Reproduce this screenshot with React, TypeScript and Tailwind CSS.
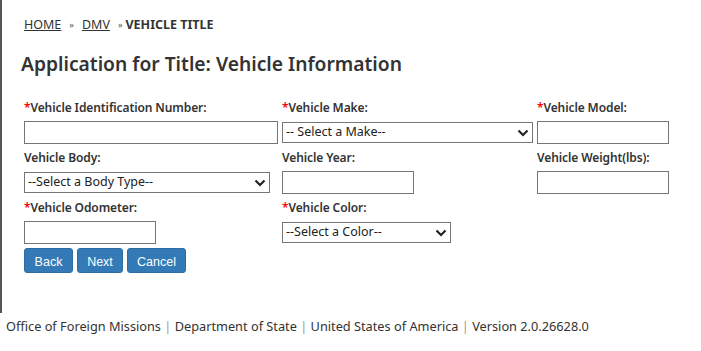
import React from 'react'

const font = { fontFamily: '"Noto Sans", "Open Sans", sans-serif' }

const Label = ({ text, required }: { text: string; required?: boolean }) => (
    <div className="pt-[2px] text-[12px] leading-[16px] font-semibold tracking-[-0.1px] text-[#333] whitespace-nowrap">
        {required && <span className="text-[#f00]">*</span>}
        {text}
    </div>
)

const TextBox = ({ w }: { w: string }) => (
    <div className={`${w} h-[23px] mt-[5px] border border-[#767676] bg-white`} />
)

const Chevron = () => (
    <svg width="12" height="8" viewBox="0 0 12 8" fill="none">
        <path d="M1.5 1.5 L6 6 L10.5 1.5" stroke="#222" strokeWidth="2.2" />
    </svg>
)

const Select = ({ w, text }: { w: string; text: string }) => (
    <div className={`${w} h-[21px] mt-[6px] border border-[#767676] bg-white flex items-center justify-between pl-[3px] pr-[3px]`}>
        <span className="text-[12.5px] text-[#222] whitespace-nowrap">{text}</span>
        <Chevron />
    </div>
)

const Button = ({ label, w }: { label: string; w: string }) => (
    <button
        className={`${w} h-[25px] pt-[2px] rounded-[3px] bg-[#337ab7] border border-[#2e6da4] text-white text-[12.5px] leading-[16px]`}
        style={{ fontFamily: '"Liberation Sans", Arial, sans-serif' }}
    >
        {label}
    </button>
)

export default function App() {
    return (
        <div className="w-[701px] h-[351px] bg-white flex flex-col" style={font}>
            <div className="h-[313px] border-l-2 border-[#555] pl-[22px] pt-[17px]">
                {/* Breadcrumb */}
                <div className="flex items-center text-[12.5px] leading-[16px] text-[#333]">
                    <a className="underline">HOME</a>
                    <span className="mx-[8px] text-[9px] text-[#555]">»</span>
                    <a className="underline">DMV</a>
                    <span className="ml-[8px] mr-[3px] text-[9px] text-[#555]">»</span>
                    <span className="font-bold">VEHICLE TITLE</span>
                </div>

                <h1 className="mt-[17px] -ml-[3px] text-[19.25px] leading-[28px] font-semibold text-[#333]">
                    Application for Title: Vehicle Information
                </h1>

                <div className="mt-[20px] grid grid-cols-[258px_255px_1fr] gap-y-[4px]">
                    <div className="flex flex-col">
                        <Label text="Vehicle Identification Number:" required />
                        <TextBox w="w-[254px]" />
                    </div>
                    <div className="flex flex-col">
                        <Label text="Vehicle Make:" required />
                        <Select w="w-[251px]" text="-- Select a Make--" />
                    </div>
                    <div className="flex flex-col">
                        <Label text="Vehicle Model:" required />
                        <TextBox w="w-[132px]" />
                    </div>

                    <div className="flex flex-col">
                        <Label text="Vehicle Body:" />
                        <Select w="w-[246px]" text="--Select a Body Type--" />
                    </div>
                    <div className="flex flex-col">
                        <Label text="Vehicle Year:" />
                        <TextBox w="w-[132px]" />
                    </div>
                    <div className="flex flex-col">
                        <Label text="Vehicle Weight(lbs):" />
                        <TextBox w="w-[132px]" />
                    </div>

                    <div className="flex flex-col">
                        <Label text="Vehicle Odometer:" required />
                        <TextBox w="w-[132px]" />
                    </div>
                    <div className="flex flex-col">
                        <Label text="Vehicle Color:" required />
                        <Select w="w-[169px]" text="--Select a Color--" />
                    </div>
                    <div />
                </div>

                <div className="mt-[4px] flex gap-[4px]">
                    <Button label="Back" w="w-[49px]" />
                    <Button label="Next" w="w-[46px]" />
                    <Button label="Cancel" w="w-[59px]" />
                </div>
            </div>

            <footer className="pl-[6px] mt-[5px] text-[12.75px] leading-[16px] text-[#333] whitespace-nowrap">
                Office of Foreign Missions <span className="text-[#999]">|</span> Department of State{' '}
                <span className="text-[#999]">|</span> United States of America <span className="text-[#999]">|</span>{' '}
                Version 2.0.26628.0
            </footer>
        </div>
    )
}
